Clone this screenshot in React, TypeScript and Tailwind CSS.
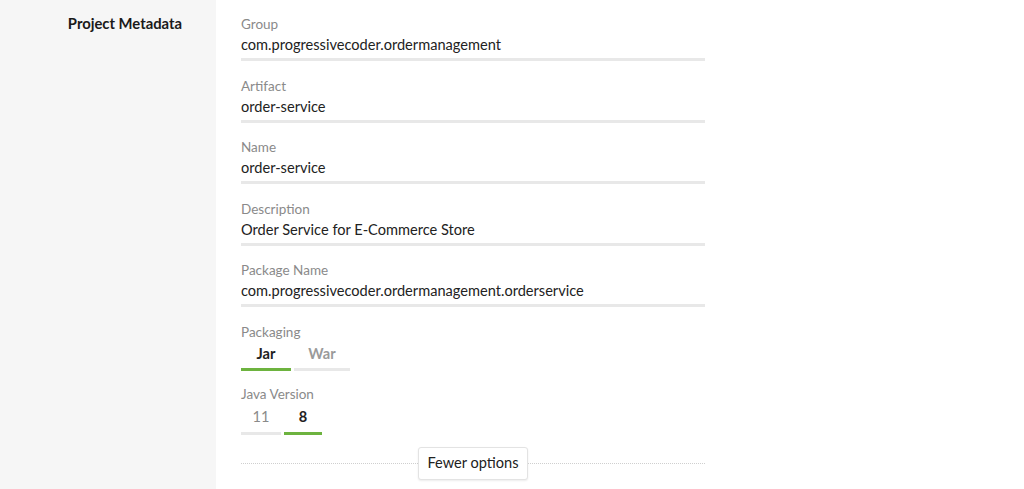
export default function App() {
  const fields = [
    { label: "Group", value: "com.progressivecoder.ordermanagement" },
    { label: "Artifact", value: "order-service" },
    { label: "Name", value: "order-service" },
    { label: "Description", value: "Order Service for E-Commerce Store" },
    { label: "Package Name", value: "com.progressivecoder.ordermanagement.orderservice" },
  ];

  return (
    <div className="flex w-[1024px] h-[489px] bg-white overflow-hidden font-['Lato',sans-serif]">
      {/* left column */}
      <div className="w-[216px] shrink-0 bg-[#f6f6f6] flex justify-end pr-[34px] pt-[14px]">
        <h2 className="text-[14.8px] leading-[18px] font-bold text-[#1a1a1a] h-[18px]">Project Metadata</h2>
      </div>

      {/* form */}
      <div className="w-[464px] ml-[25px] pt-[16px]">
        {fields.map((f) => (
          <div key={f.label} className="mb-[16.5px]">
            <div className="text-[13.5px] leading-[16px] text-[#8a8a8a]">{f.label}</div>
            <div className="mt-[3px] text-[14.6px] leading-[20px] text-[#222]">{f.value}</div>
            <div className="mt-[3px] h-[3px] bg-[#e8e8e8]" />
          </div>
        ))}

        <div className="mt-[1px] mb-[15px]">
          <div className="text-[13.5px] leading-[16px] text-[#8a8a8a]">Packaging</div>
          <div className="mt-[4px] flex gap-[3px]">
            <div className="w-[50px]">
              <div className="text-center text-[14.6px] leading-[20px] font-bold text-[#222]">Jar</div>
              <div className="mt-[4px] h-[3px] bg-[#6db33f]" />
            </div>
            <div className="w-[56px]">
              <div className="text-center text-[14.6px] leading-[20px] font-bold text-[#9a9a9a]">War</div>
              <div className="mt-[4px] h-[3px] bg-[#e8e8e8]" />
            </div>
          </div>
        </div>

        <div>
          <div className="text-[13.5px] leading-[16px] text-[#8a8a8a]">Java Version</div>
          <div className="mt-[5px] flex gap-[3px]">
            <div className="w-[40px]">
              <div className="text-center text-[14.6px] leading-[20px] text-[#8a8a8a]">11</div>
              <div className="mt-[5px] h-[3px] bg-[#e8e8e8]" />
            </div>
            <div className="w-[38px]">
              <div className="text-center text-[14.6px] leading-[20px] font-bold text-[#222]">8</div>
              <div className="mt-[5px] h-[3px] bg-[#6db33f]" />
            </div>
          </div>
        </div>

        <div className="mt-[12px] flex items-center">
          <div className="flex-1 border-t border-dotted border-[#cfcfcf]" />
          <button className="h-[33px] w-[110px] rounded-[3px] border border-[#e3e3e3] bg-white text-[14.6px] text-[#222] shadow-[0_1px_2px_rgba(0,0,0,0.08)]">
            Fewer options
          </button>
          <div className="flex-1 border-t border-dotted border-[#cfcfcf]" />
        </div>
      </div>
    </div>
  );
}
